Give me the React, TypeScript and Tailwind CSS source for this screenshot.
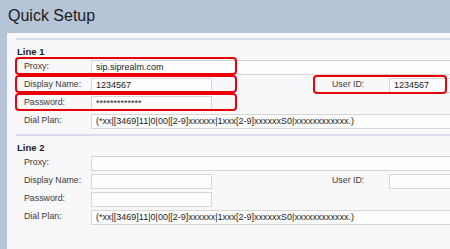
import React from 'react';

const DIAL_PLAN = '(*xx|[3469]11|0|00|[2-9]xxxxxx|1xxx[2-9]xxxxxxS0|xxxxxxxxxxxx.)';

type Line = {
  name: string;
  proxy: string;
  display: string;
  password: string;
  userId: string;
};

const lines: Line[] = [
  { name: 'Line 1', proxy: 'sip.siprealm.com', display: '1234567', password: '*************', userId: '1234567' },
  { name: 'Line 2', proxy: '', display: '', password: '', userId: '' },
];

const Field = ({ value, className }: { value: string; className: string }) => (
  <div
    className={`h-[15px] shrink-0 border border-[#d6d6d6] bg-[#fdfdfd] pl-[4px] text-[9px] leading-[13px] text-[#1a1a1a] whitespace-nowrap overflow-hidden ${className}`}
  >
    {value}
  </div>
);

const Row = ({ label, children }: { label: string; children: React.ReactNode }) => (
  <div className="flex h-[18px] items-center pl-[8px]">
    <div className="w-[67px] shrink-0 text-[#3a3a3a]">{label}</div>
    {children}
  </div>
);

const LineSection = ({ line }: { line: Line }) => (
  <div className="border-t-2 border-[#d9dbf0] ml-[9px]">
    <div className="pt-[6px] pl-[1px] text-[9.5px] font-bold leading-[12px] text-[#222]">{line.name}</div>
    <Row label="Proxy:">
      <Field value={line.proxy} className="w-[400px]" />
    </Row>
    <Row label="Display Name:">
      <Field value={line.display} className="w-[121px]" />
      <div className="ml-[120px] w-[57px] shrink-0 text-[#3a3a3a]">User ID:</div>
      <Field value={line.userId} className="w-[70px]" />
    </Row>
    <Row label="Password:">
      <Field value={line.password} className="w-[121px]" />
    </Row>
    <Row label="Dial Plan:">
      <Field value={DIAL_PLAN} className="w-[400px]" />
    </Row>
  </div>
);

const App = () => {
  return (
    <div className="relative w-[450px] h-[249px] overflow-hidden bg-[#b5c4d6] font-['Liberation_Sans',Arial,sans-serif] text-[8.8px]">
      <div className="h-[33px] pl-[8px] pt-[6px] text-[16px] leading-[19px] text-[#1c1c1c]">Quick Setup</div>
      <div className="ml-[7px] h-[216px] bg-[#f8f8fb] pt-[5px]">
        <LineSection line={lines[0]} />
        <div className="h-[4px]" />
        <LineSection line={lines[1]} />
      </div>

      {/* red highlight boxes */}
      <div className="absolute left-[15px] top-[57px] w-[222px] h-[18px] rounded-[4px] border-2 border-[#e8000b]" />
      <div className="absolute left-[15px] top-[75px] w-[222px] h-[18px] rounded-[4px] border-2 border-[#e8000b]" />
      <div className="absolute left-[15px] top-[93px] w-[222px] h-[18px] rounded-[4px] border-2 border-[#e8000b]" />
      <div className="absolute left-[313px] top-[75px] w-[134px] h-[19px] rounded-[4px] border-2 border-[#e8000b]" />
    </div>
  );
};

export default App;
